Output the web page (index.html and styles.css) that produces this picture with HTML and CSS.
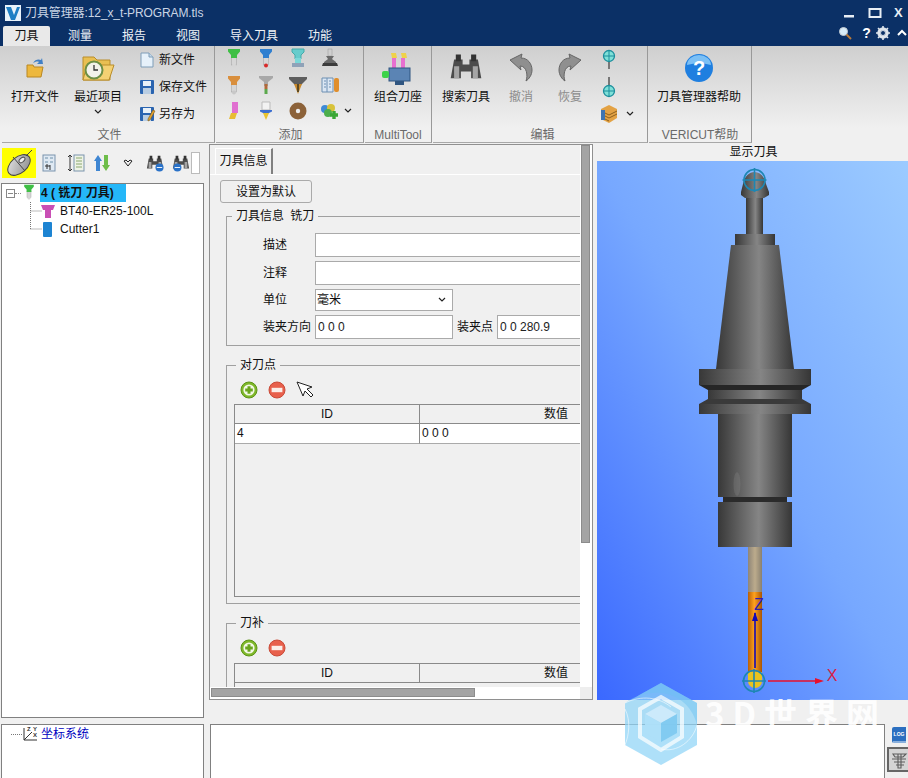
FILE: index.html
```html
<!DOCTYPE html>
<html lang="zh">
<head>
<meta charset="utf-8">
<title>刀具管理器</title>
<link rel="stylesheet" href="styles.css">
</head>
<body>
<svg class="defs" width="0" height="0" aria-hidden="true">
  <defs>
    <symbol id="tip" viewBox="0 0 20 20">
      <rect x="7.5" y="9" width="5" height="8" fill="#d6d6d6" stroke="#a8a8a8" stroke-width=".6"/>
      <path d="M4 1h12v2.500l-3 3.500v3H7V7L4 3.500z" fill="var(--c)"/>
      <circle cx="10" cy="17.500" r="2" fill="var(--d)"/>
    </symbol>
    <symbol id="plus" viewBox="0 0 18 18">
      <circle cx="9" cy="9" r="8" fill="#7fb82a" stroke="#5c9415"/>
      <circle cx="9" cy="9" r="5.600" fill="#f4f8e8"/>
      <path d="M9 5.200v7.600M5.200 9h7.600" stroke="#6aa51c" stroke-width="3"/>
    </symbol>
    <symbol id="minus" viewBox="0 0 18 18">
      <circle cx="9" cy="9" r="8" fill="#e8604c" stroke="#c94a38"/>
      <rect x="3.600" y="6.800" width="10.800" height="4.400" fill="#fbeee9"/>
    </symbol>
    <symbol id="binoc" viewBox="0 0 20 20">
      <path d="M3 5h5v3h4V5h5l2 11h-6v-4H7v4H1z" fill="#4c4c4c"/>
      <path d="M4 2h3v4H4zM13 2h3v4h-3z" fill="#333"/>
      <path d="M3 9h3v7H3zM14 9h3v7h-3z" fill="#a5a5a5"/>
    </symbol>
    <symbol id="chev" viewBox="0 0 8 6">
      <path d="M1 1l3 3 3-3" fill="none" stroke="#222" stroke-width="1.200"/>
    </symbol>
    <linearGradient id="steel" x1="0" x2="1" y1="0" y2="0">
      <stop offset="0" stop-color="#383838"/><stop offset=".55" stop-color="#858585"/><stop offset="1" stop-color="#363636"/>
    </linearGradient>
    <linearGradient id="orange" x1="0" x2="1" y1="0" y2="0">
      <stop offset="0" stop-color="#b85f08"/><stop offset=".45" stop-color="#ffa21c"/><stop offset="1" stop-color="#a85505"/>
    </linearGradient>
    <linearGradient id="tan" x1="0" x2="1" y1="0" y2="0">
      <stop offset="0" stop-color="#8f8678"/><stop offset=".5" stop-color="#bcab8c"/><stop offset="1" stop-color="#8a8170"/>
    </linearGradient>
    <linearGradient id="sky" x1="0" y1="1" x2="1" y2="0">
      <stop offset="0" stop-color="#3a68ff"/><stop offset=".5" stop-color="#77a8ff"/><stop offset="1" stop-color="#9ccbff"/>
    </linearGradient>
    <linearGradient id="mouse" x1="0" x2="1" y1="0" y2="1">
      <stop offset="0" stop-color="#e4e4e4"/><stop offset="1" stop-color="#8a8a8a"/>
    </linearGradient>
  </defs>
</svg>

<header class="titlebar">
  <svg class="logo" viewBox="0 0 16 16"><rect width="16" height="16" fill="#e9f3fb"/><path d="M1 2h5l3 8 3-8h3l-5 13H6z" fill="#1f7fc4"/></svg>
  <span class="title">刀具管理器:12_x_t-PROGRAM.tls</span>
  <div class="winbtns">
    <svg class="winic" viewBox="0 0 14 12"><rect x="2" y="8" width="10" height="2.500" fill="#e8eef5"/></svg>
    <svg class="winic" viewBox="0 0 14 12"><path d="M1.500 2h11v8h-11z" fill="none" stroke="#e8eef5" stroke-width="2"/></svg>
    <span class="closex">X</span>
  </div>
</header>

<nav class="tabbar">
  <span class="tab tab-on">刀具</span>
  <span class="tab t2">测量</span>
  <span class="tab t3">报告</span>
  <span class="tab t4">视图</span>
  <span class="tab t5">导入刀具</span>
  <span class="tab t6">功能</span>
  <div class="tabtools">
    <svg class="tt ttmag" viewBox="0 0 14 14"><circle cx="5.500" cy="5.500" r="4" fill="#d8ecf8" stroke="#c4ccd4"/><path d="M8.500 8.500l4.500 4.500" stroke="#b87a3a" stroke-width="2"/></svg>
    <span class="tq">?</span>
    <svg class="tt" viewBox="0 0 14 14"><circle cx="7" cy="7" r="4.200" fill="none" stroke="#dfe5ec" stroke-width="3"/><path d="M7 0v14M0 7h14M2 2l10 10M12 2L2 12" stroke="#dfe5ec" stroke-width="1.600"/><circle cx="7" cy="7" r="2" fill="#0b3066"/></svg>
    <svg class="tt" viewBox="0 0 14 14"><path d="M3 9l4-4 4 4" fill="none" stroke="#fff" stroke-width="2"/></svg>
  </div>
</nav>

<section class="ribbon">
  <div class="group g-file">
    <div class="gbody">
      <div class="big w60">
        <div class="bigic"><svg class="i24" viewBox="0 0 24 24"><path d="M4 9h6l1 2h9l-2 10H4z" fill="#edb83e" stroke="#b98722"/><path d="M10 7c2-4 6-4 8-3l1-2 1 6-6 0 2-2c-2-1-4 0-6 1z" fill="#3f7fc6"/></svg></div>
        <span>打开文件</span>
      </div>
      <div class="big w66">
        <div class="bigic"><svg class="i34" viewBox="0 0 34 28"><path d="M2 3h11l3 3h13v20H2z" fill="#e9bf52" stroke="#b98d2a"/><path d="M6 11h27l-5 15H2z" fill="#f4d173" stroke="#b98d2a"/><circle cx="13" cy="16" r="8.500" fill="#f2f2ea" stroke="#6d8f45" stroke-width="2"/><path d="M13 11v5h4" fill="none" stroke="#333" stroke-width="1.300"/></svg></div>
        <span>最近项目</span>
        <svg class="chev"><use href="#chev"/></svg>
      </div>
      <div class="smallcol">
        <div class="small"><svg class="i16" viewBox="0 0 16 16"><path d="M2 1h8l4 4v10H2z" fill="#e6f1fa" stroke="#7f9db8"/><path d="M10 1v4h4" fill="#c5d9ea" stroke="#7f9db8"/></svg><span>新文件</span></div>
        <div class="small"><svg class="i16" viewBox="0 0 16 16"><rect x="1" y="1" width="14" height="14" rx="1" fill="#2a64b0"/><rect x="4" y="2" width="8" height="5" fill="#e8f0f8"/><rect x="4" y="9" width="8" height="6" fill="#b9cde2"/></svg><span>保存文件</span></div>
        <div class="small"><svg class="i16" viewBox="0 0 16 16"><rect x="1" y="1" width="14" height="14" rx="1" fill="#2a64b0"/><rect x="4" y="2" width="8" height="5" fill="#e8f0f8"/><rect x="4" y="9" width="8" height="6" fill="#b9cde2"/><path d="M9 13l5-9 2 1-5 9-2 1z" fill="#e0a030" stroke="#7d5a18" stroke-width=".6"/></svg><span>另存为</span></div>
      </div>
    </div>
    <div class="glabel">文件</div>
  </div>

  <div class="group g-add">
    <div class="gbody addgrid">
      <svg class="i20 c-green"><use href="#tip"/></svg>
      <svg class="i20 c-blue"><use href="#tip"/></svg>
      <svg class="i20" viewBox="0 0 20 20"><path d="M4 1h12v3l-3 3v4H7V7L4 4z" fill="#66cccc" stroke="#4aa"/><rect x="7" y="10" width="6" height="5" fill="#7ad8d8"/><rect x="4" y="15" width="12" height="4" fill="#8fa2b8"/></svg>
      <svg class="i20" viewBox="0 0 20 20"><rect x="8" y="1" width="4" height="7" fill="#cfcfcf" stroke="#999" stroke-width=".5"/><path d="M6 8h8l-2 3 4 3v1H4v-1l4-3z" fill="#6a6a6a"/><path d="M3 15h14l1 3H2z" fill="#3c3c3c"/></svg>
      <i></i>
      <svg class="i20 c-orange"><use href="#tip"/></svg>
      <svg class="i20" viewBox="0 0 20 20"><path d="M3 1h14v2l-5 4v4H8V7L3 3z" fill="#a8a8a8"/><rect x="8.500" y="9" width="3" height="5" fill="#b26a3a"/><rect x="8.500" y="14" width="3" height="5" fill="#5ba84c"/></svg>
      <svg class="i20" viewBox="0 0 20 20"><path d="M1 2h18v2l-6 6H7L1 4z" fill="#5e5e5e"/><path d="M6 9h8l-4 10z" fill="#c98a2e"/><path d="M9 9h2v8h-2z" fill="#5e4a22"/></svg>
      <svg class="i20" viewBox="0 0 20 20"><path d="M2 3h11v14H2z" fill="#dbe6f3" stroke="#6d8fb2"/><path d="M7 3v14" stroke="#6d8fb2"/><path d="M4 6h2M4 9h2M4 12h2M9 6h2M9 9h2M9 12h2" stroke="#6d8fb2"/><rect x="14" y="3" width="5" height="14" rx="2" fill="#e08e2c"/></svg>
      <i></i>
      <svg class="i20" viewBox="0 0 20 20"><rect x="8" y="1" width="6" height="11" fill="#e070d0"/><path d="M7 12h6l-2 6H5z" fill="#e8bc34"/></svg>
      <svg class="i20" viewBox="0 0 20 20"><path d="M6 1h8v8H6z" fill="#f2f2f2" stroke="#bbb"/><path d="M4 9h12v1.500l-4 2H8l-4-2z" fill="#3c6fd0"/><path d="M7 12h6l-3 7z" fill="#e8c230"/></svg>
      <svg class="i20" viewBox="0 0 20 20"><circle cx="10" cy="10" r="8.500" fill="#8c6239"/><circle cx="10" cy="10" r="2.200" fill="#eee"/></svg>
      <svg class="i20" viewBox="0 0 20 20"><circle cx="5" cy="8" r="4" fill="#3f8ad6"/><circle cx="11" cy="7" r="4" fill="#d8c23a"/><circle cx="8" cy="12" r="4" fill="#4cae4c"/><path d="M14 10v8M10 14h8" stroke="#3aa635" stroke-width="3.400"/></svg>
      <svg class="chev chev-add"><use href="#chev"/></svg>
    </div>
    <div class="glabel">添加</div>
  </div>

  <div class="group g-multi">
    <div class="gbody">
      <div class="big w66b">
        <div class="bigic"><svg class="i34" viewBox="0 0 34 34"><rect x="11" y="7" width="4" height="11" fill="#e76fd0"/><rect x="20" y="7" width="4" height="11" fill="#e76fd0"/><path d="M10 2h5l1 5h-5zM20 2h5l1 5h-5z" fill="#efd24a"/><rect x="8" y="17" width="21" height="13" fill="#5b84b4" stroke="#2f5580"/><rect x="14" y="30" width="9" height="4" fill="#2f5580"/><rect x="1" y="20" width="7" height="7" rx="2" fill="#3cd24a"/></svg></div>
        <span>组合刀座</span>
      </div>
    </div>
    <div class="glabel">MultiTool</div>
  </div>

  <div class="group g-edit">
    <div class="gbody">
      <div class="big w56">
        <div class="bigic"><svg class="i34"><use href="#binoc"/></svg></div>
        <span>搜索刀具</span>
      </div>
      <div class="big w54 off">
        <div class="bigic"><svg class="i28" viewBox="0 0 28 32"><path d="M3 8l12-6-1 4c7 0 11 6 11 12 0 5-3 9-6 11 2-5 1-15-6-15l1 4z" fill="#8f8f8f" stroke="#666"/></svg></div>
        <span>撤消</span>
      </div>
      <div class="big w44 off">
        <div class="bigic"><svg class="i28 flip" viewBox="0 0 28 32"><path d="M3 8l12-6-1 4c7 0 11 6 11 12 0 5-3 9-6 11 2-5 1-15-6-15l1 4z" fill="#8f8f8f" stroke="#666"/></svg></div>
        <span>恢复</span>
      </div>
      <div class="editcol">
        <svg class="i16t" viewBox="0 0 16 24"><path d="M8 12v9" stroke="#777" stroke-width="2"/><circle cx="8" cy="8" r="5.500" fill="#7fe0d8" stroke="#1c8e9c" stroke-width="1.300"/><path d="M8 2v12M2 8h12" stroke="#1c8e9c"/></svg>
        <i></i>
        <svg class="i16t" viewBox="0 0 16 24"><path d="M8 2v9" stroke="#777" stroke-width="2"/><circle cx="8" cy="16" r="5.500" fill="#7fe0d8" stroke="#1c8e9c" stroke-width="1.300"/><path d="M8 10v12M2 16h12" stroke="#1c8e9c"/></svg>
        <i></i>
        <svg class="i20" viewBox="0 0 20 20"><path d="M10 1l8 4v9l-8 5-8-4V5z" fill="#e3a244"/><path d="M2 7l8 4 8-4M2 10l8 4 8-4M2 13l8 4" fill="none" stroke="#8d5f1c"/><rect x="2" y="6" width="4" height="10" fill="#3f74b0"/></svg>
        <svg class="chev"><use href="#chev"/></svg>
      </div>
    </div>
    <div class="glabel">编辑</div>
  </div>

  <div class="group g-help">
    <div class="gbody">
      <div class="big w103">
        <div class="bigic"><svg class="i30" viewBox="0 0 30 30"><circle cx="15" cy="15" r="14" fill="#1f7fe0"/><path d="M3 12a12 10 0 0 1 24 0 24 12 0 0 0-24 0z" fill="#7cc0f5"/><text class="qm" x="15" y="22" text-anchor="middle">?</text></svg></div>
        <span>刀具管理器帮助</span>
      </div>
    </div>
    <div class="glabel">VERICUT帮助</div>
  </div>
</section>

<main class="work">
  <aside class="left">
    <div class="ltools">
      <div class="mousebox"><svg class="i30" viewBox="0 0 30 30"><ellipse cx="15" cy="17" rx="13" ry="8" transform="rotate(-40 15 17)" fill="url(#mouse)" stroke="#444"/><path d="M9 9l12 14M22 8l6-6" fill="none" stroke="#444"/><ellipse cx="18" cy="12" rx="3.500" ry="2" transform="rotate(-40 18 12)" fill="#eee" stroke="#555"/></svg></div>
      <span class="lt"><svg class="i18" viewBox="0 0 18 18"><rect x="3" y="1" width="12" height="16" fill="#dfe9f3" stroke="#7a93ad"/><path d="M5 4h3M10 4h3M5 8h3M10 8h3" stroke="#6d8fa8"/><path d="M7 10v5M5 12h5M10 11v5" stroke="#333"/></svg></span>
      <span class="lt"><svg class="i18" viewBox="0 0 18 18"><rect x="7" y="1" width="10" height="16" fill="#eef3e6" stroke="#7a93ad"/><path d="M9 4h6M9 7h6M9 10h6M9 13h6" stroke="#8aa86e"/><path d="M3 1v16M1 3l2-2 2 2M1 15l2 2 2-2" fill="none" stroke="#333"/></svg></span>
      <span class="lt"><svg class="i18" viewBox="0 0 18 18"><path d="M5 1l4 6H7v10H3V7H1z" fill="#3f86d2"/><path d="M13 17l4-6h-2V1h-4v10H9z" fill="#6ebd4a"/></svg></span>
      <span class="lt"><svg class="i10" viewBox="0 0 10 8"><path d="M1 2l2-1 2 2 2-2 2 1-4 5z" fill="none" stroke="#222"/></svg></span>
      <span class="lt"><svg class="i18" viewBox="0 0 20 20"><use href="#binoc" width="20" height="20"/><circle cx="15" cy="15" r="4.500" fill="#2a72c8"/><path d="M12 15h6" stroke="#fff"/></svg></span>
      <span class="lt"><svg class="i18" viewBox="0 0 20 20"><use href="#binoc" width="20" height="20"/><circle cx="6" cy="15" r="4.500" fill="#2a72c8"/><path d="M3 15h6" stroke="#fff"/></svg></span>
      <span class="ltbox"></span>
    </div>
    <div class="tree">
      <div class="trow">
        <span class="exp"></span><span class="dots"></span>
        <svg class="i16 c-green tico"><use href="#tip"/></svg>
        <span class="sel">4 ( 铣刀 刀具)</span>
      </div>
      <div class="trow">
        <svg class="conn" viewBox="0 0 12 18"><path d="M.5 0v18M.5 9H12" stroke="#777" stroke-dasharray="1 1"/></svg>
        <svg class="i16 tinner" viewBox="0 0 16 16"><path d="M1 2h14l-2 5h-2v8H5V7H3z" fill="#c94fb5"/></svg>
        <span>BT40-ER25-100L</span>
      </div>
      <div class="trow">
        <svg class="conn" viewBox="0 0 12 18"><path d="M.5 0v9M.5 9H12" stroke="#777" stroke-dasharray="1 1"/></svg>
        <svg class="i16 tinner" viewBox="0 0 16 16"><rect x="3" y="1" width="9" height="15" rx="1" fill="#1d84d2"/></svg>
        <span>Cutter1</span>
      </div>
    </div>
  </aside>

  <section class="center">
    <div class="scroller">
      <div class="tabstrip"><span class="paneltab">刀具信息</span></div>
      <button class="defbtn" type="button">设置为默认</button>
      <fieldset class="box box1">
        <legend class="lg1">刀具信息 铣刀</legend>
        <div class="frow"><label class="fl">描述</label><input class="in wide" type="text"></div>
        <div class="frow"><label class="fl">注释</label><input class="in wide" type="text"></div>
        <div class="frow"><label class="fl">单位</label><div class="sel-box"><span>毫米</span><svg class="chev"><use href="#chev"/></svg></div></div>
        <div class="frow"><label class="fl">装夹方向</label><input class="in mid" type="text" value="0 0 0"><label class="fl2">装夹点</label><input class="in wide2" type="text" value="0 0 280.9"></div>
      </fieldset>
      <fieldset class="box box2">
        <legend>对刀点</legend>
        <div class="ops">
          <svg class="i18"><use href="#plus"/></svg>
          <svg class="i18"><use href="#minus"/></svg>
          <svg class="i18" viewBox="0 0 18 18"><path d="M1 1l6 14 2-5 6 6 2-2-6-6 5-2z" fill="#fff" stroke="#222"/></svg>
        </div>
        <div class="tbl">
          <div class="th">ID</div><div class="th thl">数值</div>
          <div class="td">4</div><div class="td tdl">0 0 0</div>
        </div>
      </fieldset>
      <fieldset class="box box3">
        <legend>刀补</legend>
        <div class="ops">
          <svg class="i18"><use href="#plus"/></svg>
          <svg class="i18"><use href="#minus"/></svg>
        </div>
        <div class="tbl tbl2">
          <div class="th">ID</div><div class="th thl">数值</div>
        </div>
      </fieldset>
    </div>
    <div class="vbar"><div class="vthumb"></div></div>
    <div class="hbar"><div class="hthumb"></div></div>
    <div class="corner"></div>
  </section>

  <section class="viewer">
    <div class="vlabel">显示刀具</div>
    <svg class="scene" viewBox="597 161 311 539" preserveAspectRatio="none">
      <rect x="597" y="161" width="311" height="539" fill="url(#sky)"/>
      <rect x="746" y="196" width="17" height="38" fill="url(#steel)"/>
      <path d="M743 184c3-16 20-16 23 0l3 8v3l-5 3h-19l-4-3v-3z" fill="url(#steel)"/>
      <rect x="735" y="234" width="40" height="11" fill="url(#steel)"/>
      <path d="M731 245h48l15 124h-78z" fill="url(#steel)"/>
      <rect x="699" y="369" width="112" height="16" fill="url(#steel)"/>
      <path d="M699 385h112l-9 5h-94z" fill="#262626"/>
      <rect x="708" y="390" width="94" height="9" fill="url(#steel)"/>
      <path d="M708 399h94l9 5h-112z" fill="#3a3a3a"/>
      <rect x="699" y="404" width="112" height="10" fill="url(#steel)"/>
      <rect x="718" y="414" width="74" height="83" fill="url(#steel)"/>
      <ellipse cx="737" cy="484" rx="3.500" ry="12" fill="#b0b0b0" fill-opacity=".16"/>
      <rect x="723" y="497" width="64" height="5" fill="#2b2b2b"/>
      <rect x="718" y="502" width="74" height="45" fill="url(#steel)"/>
      <rect x="748" y="547" width="14" height="45" fill="url(#tan)"/>
      <rect x="748" y="592" width="14" height="80" fill="url(#orange)"/>
      <path d="M748 672h14v9a7 7 0 0 1-14 0z" fill="#e8c21e"/>
      <g class="cross"><circle cx="754.500" cy="180" r="10.500"/><path d="M754.500 168v24M742.500 180h24"/><circle cx="754" cy="681" r="10.500"/><path d="M754 669v24M742 681h24"/></g>
      <path d="M755 668v-55" stroke="#1208b8" stroke-width="1.600"/><path d="M755 612l-3 9h6z" fill="#1208b8"/>
      <path d="M768 681h48" stroke="#e8102c" stroke-width="1.600"/><path d="M824 681l-9-3v6z" fill="#e8102c"/>
      <text class="axis axz" x="759" y="610" text-anchor="middle">Z</text>
      <text class="axis axx" x="832" y="681" text-anchor="middle">X</text>
    </svg>
  </section>
</main>

<footer class="bottom">
  <div class="coord">
    <span class="cdots"></span>
    <svg class="i16" viewBox="0 0 16 16"><path d="M2 2v12h13M2 14l8-8" fill="none" stroke="#333"/><text class="cxyz" x="5" y="5">Z</text><text class="cxyz" x="11" y="5">Y</text><text class="cxyz" x="11" y="11">X</text></svg>
    <span class="clink">坐标系统</span>
  </div>
  <div class="logpane"></div>
  <div class="sidebtns">
    <svg class="logic" viewBox="0 0 16 18"><path d="M1 2a2 2 0 0 1 2-2h12v16H3a2 2 0 0 1-2-2z" fill="#2b6fc0"/><text class="lgt" x="8" y="9" text-anchor="middle">LOG</text><path d="M2 15h13" stroke="#e8f0f8"/></svg>
    <div class="pressed"><svg class="i18" viewBox="0 0 18 18"><path d="M3 3h13l-3 3H5zM2 8h14M4 11h11M6 14h8M8 3v14h3V3" fill="none" stroke="#5c5c5c" stroke-width="1.100"/></svg></div>
  </div>
</footer>

<div class="watermark" aria-hidden="true">
  <svg class="wmhex" viewBox="0 0 72 82">
    <path d="M36 0l36 20v42L36 82 0 62V20z" fill="#8fd4f6" fill-opacity=".72"/>
    <path d="M36 0l36 20v22C68 26 56 12 36 10 24 9 10 12 0 20z" fill="#6cc0f2" fill-opacity=".45"/>
    <path d="M0 20c16-8 34-6 46 4M72 42C68 58 52 70 36 66M0 62c4-10 6-24 0-36" fill="none" stroke="#fff" stroke-opacity=".7" stroke-width=".8"/>
    <path d="M36 14l21 12v28L36 67 15 54V26z" fill="none" stroke="#fff" stroke-opacity=".7" stroke-width="4"/>
    <path d="M36 22l16 9-16 9-16-9z" fill="#cdeafb" fill-opacity=".95"/>
    <path d="M20 31l16 9v19l-16-9z" fill="#aedff9" fill-opacity=".95"/>
    <path d="M52 31l-16 9v19l16-9z" fill="#7fc9f0" fill-opacity=".95"/>
  </svg>
  <span class="wmtext">3D世界网</span>
</div>
</body>
</html>
```
FILE: styles.css
```css
* { box-sizing: border-box; }
html, body { margin: 0; padding: 0; }
body {
  width: 908px; height: 778px; overflow: hidden; position: relative;
  background: #f0f0f0; color: #111;
  font: 12px/16px "Liberation Sans", "Noto Sans CJK SC", sans-serif;
}
svg { display: block; flex: none; overflow: visible; }
.defs { position: absolute; }

.i10 { width: 10px; height: 8px; }
.i16 { width: 16px; height: 16px; }
.i18 { width: 18px; height: 18px; }
.i20 { width: 20px; height: 20px; }
.i24 { width: 24px; height: 24px; }
.i28 { width: 28px; height: 32px; }
.i30 { width: 30px; height: 30px; }
.i34 { width: 34px; height: 34px; }
.i16t { width: 16px; height: 24px; }
.flip { transform: scaleX(-1); }
.chev { width: 8px; height: 6px; }

.c-green { --c: #3fbf45; --d: #d6d6d6; }
.c-blue { --c: #2f7fd0; --d: #d82a2a; }
.c-orange { --c: #d98f3d; --d: #c8c8c8; }

.titlebar { height: 25px; background: #0b3066; color: #c9d5e5; display: flex; align-items: center; padding-left: 5px; }
.logo { width: 16px; height: 16px; margin-right: 4px; }
.title { white-space: nowrap; letter-spacing: -.1px; }
.winbtns { margin-left: auto; display: flex; align-items: center; gap: 12px; padding-right: 2px; }
.winic { width: 14px; height: 12px; }
.closex { color: #e8eef5; font-weight: 700; font-size: 13px; width: 12px; }

.tabbar { height: 21px; background: #0b3066; display: flex; color: #eef2f7; line-height: 23px; }
.tab { text-align: center; white-space: nowrap; }
.tab-on { width: 47px; margin-left: 3px; margin-top: 1px; background: #e9e9e9; color: #111; line-height: 21px; border-radius: 2px 2px 0 0; }
.t2 { width: 30px; margin-left: 15px; }
.t3 { width: 30px; margin-left: 24px; }
.t4 { width: 30px; margin-left: 24px; }
.t5 { width: 60px; margin-left: 21px; }
.t6 { width: 30px; margin-left: 21px; }
.tabtools { margin-left: auto; margin-right: -1px; display: flex; align-items: flex-start; gap: 5px; padding-top: 1px; }
.tt { width: 14px; height: 14px; }
.ttmag { margin-right: 5px; }
.tq { color: #fff; font-weight: 700; font-size: 14px; line-height: 14px; width: 9px; text-align: center; }

.ribbon { height: 97px; display: flex; padding-left: 2px; background: linear-gradient(#cfcfcf, #f0f0f0 85%); }
.group { display: flex; flex-direction: column; border-right: 1px solid #999; border-bottom: 1px solid #a8a8a8; margin-right: 1px; }
.gbody { flex: 1; display: flex; min-height: 0; }
.glabel { height: 14px; flex: none; text-align: center; color: #6a6a6a; line-height: 14px; white-space: nowrap; }
.g-file { width: 213px; padding-left: 3px; }
.g-add { width: 148px; padding-left: 2px; }
.g-multi { width: 67px; }
.g-edit { width: 215px; padding-left: 5px; }
.g-help { width: 103px; margin-right: 0; }

.big { display: flex; flex-direction: column; align-items: center; white-space: nowrap; }
.bigic { height: 43px; flex: none; display: flex; align-items: center; justify-content: center; }
.big > span { line-height: 17px; }
.big .chev { margin-top: 3px; }
.off { color: #8c8c8c; }
.w60 { width: 60px; }
.w66 { width: 66px; }
.w66b { width: 66px; }
.w56 { width: 56px; }
.w54 { width: 54px; }
.w44 { width: 44px; }
.w103 { width: 100px; }

.smallcol { margin-left: 8px; display: flex; flex-direction: column; }
.small { height: 27px; flex: none; display: flex; align-items: center; gap: 4px; white-space: nowrap; }

.addgrid { display: grid; grid-template-columns: repeat(4, 32px) 8px; grid-template-rows: repeat(3, 26.5px); justify-items: center; align-items: center; margin-top: -1px; }
.chev-add { margin-left: -4px; }

.editcol { width: 42px; flex: none; display: grid; grid-template-columns: 34px 8px; grid-template-rows: repeat(3, 27px); justify-items: center; align-items: center; }
.qm { font: 700 20px "Liberation Sans", sans-serif; fill: #fff; }

.work { height: 576px; margin-top: 1px; display: flex; }
.left { width: 209px; flex: none; }
.ltools { height: 39px; display: flex; padding: 4px 0 0 2px; align-items: flex-start; }
.mousebox { width: 34px; height: 30px; background: #ffff00; display: flex; align-items: center; justify-content: center; }
.lt { width: 26.4px; height: 30px; display: flex; align-items: center; justify-content: center; }
.ltbox { width: 9px; height: 22px; margin-top: 4px; background: #fff; border: 1px solid #bbb; margin-left: -3px; }
.tree { width: 203px; height: 535px; margin-left: 1px; background: #fff; border: 1px solid #808080; padding: 0 0 0 4px; }
.trow { height: 18px; display: flex; align-items: center; white-space: nowrap; }
.exp { width: 9px; height: 9px; border: 1px solid #888; background: linear-gradient(#888, #888) center/5px 1px no-repeat; }
.dots { width: 6px; border-top: 1px dotted #888; }
.tico { margin: -3px 3px 0 0; }
.sel { background: #25b7f8; font-weight: 700; height: 18px; line-height: 18px; padding: 0 1px; width: 86px; }
.conn { width: 12px; height: 18px; margin-left: 24px; }
.tinner { margin: 0 4px 0 -2px; }

.center { width: 384px; height: 556px; flex: none; border: 1px solid #909090; display: grid; grid-template-columns: 1fr 12px; grid-template-rows: 1fr 12px; background: #f0f0f0; }
.scroller { overflow: hidden; padding-top: 3px; min-width: 0; min-height: 0; }
.tabstrip { height: 27px; border-bottom: 1px solid #fff; padding-left: 5px; width: 700px; }
.paneltab { display: inline-block; height: 26px; width: 58px; line-height: 24px; text-align: center; border-right: 2px solid #808080; border-left: 1px solid #fff; border-top: 1px solid #fff; }
.defbtn { display: block; margin: 5px 0 0 10px; width: 92px; height: 23px; padding: 0; background: #f0f0f0; border: 1px solid #aaa; border-radius: 3px; font: inherit; color: #111; }
.box { margin: 5px 0 0 16px; width: 480px; padding: 8px 0 6px 0; border: 1px solid #a0a0a0; min-width: 0; }
.box legend { margin-left: 9px; padding: 0 4px; line-height: 16px; height: 16px; }
.box legend.lg1 { margin-left: 5px; word-spacing: 3px; }
.box1 { padding-top: 9px; }
.box2, .box3 { margin-top: 11px; padding-top: 7px; }
.frow { display: flex; align-items: center; margin-bottom: 4px; padding-left: 36px; }
.frow:last-child { margin-bottom: 0; }
.fl { width: 52px; white-space: nowrap; flex: none; }
.fl2 { width: 40px; margin-left: 4px; white-space: nowrap; flex: none; }
.in { height: 24px; border: 1px solid #aaa; background: #fff; font: inherit; color: #222; padding: 0 2px; outline: none; flex: none; }
.wide { width: 400px; }
.mid { width: 138px; }
.wide2 { width: 200px; }
.sel-box { width: 138px; height: 22px; background: #fff; border: 1px solid #aaa; display: flex; align-items: center; justify-content: space-between; padding: 0 6px 0 1px; flex: none; }
.ops { display: flex; gap: 10px; padding-left: 13px; height: 20px; align-items: center; margin-bottom: 4px; }
.box3 .ops { margin-bottom: 5px; }
.tbl { margin-left: 7px; width: 459px; height: 193px; border: 1px solid #8a8a8a; display: grid; grid-template-columns: 184px 1fr; grid-template-rows: 19px 20px; background: #f0f0f0; }
.tbl2 { height: 60px; }
.th { text-align: center; line-height: 18px; border-bottom: 1px solid #8a8a8a; }
.thl { border-left: 1px solid #8a8a8a; }
.td { background: #fff; line-height: 19px; padding-left: 2px; border-bottom: 1px solid #aaa; }
.tdl { border-left: 1px solid #8a8a8a; }

.vbar { background: #fff; padding-left: 1px; }
.vthumb { width: 9px; height: 398px; background: #a4a4a4; border: 1px solid #8c8c8c; }
.hbar { background: #fff; padding: 1px 0 0 1px; }
.hthumb { width: 264px; height: 9px; background: #a4a4a4; border: 1px solid #8c8c8c; }
.corner { background: #eeeeee; }

.viewer { width: 311px; flex: none; margin-left: 4px; }
.vlabel { height: 17px; line-height: 17px; text-align: center; color: #111; padding-left: 2px; }
.scene { width: 311px; height: 539px; }
.cross { fill: none; stroke: #1d87b4; stroke-width: 1.6; }
.axis { font: 16px "Liberation Sans", sans-serif; }
.axz { fill: #2a20b0; }
.axx { fill: #d81e46; }

.bottom { height: 54px; margin-top: 4px; display: flex; }
.coord { width: 203px; margin-left: 1px; background: #fff; border: 1px solid #808080; border-bottom: 0; display: flex; align-items: flex-start; padding: 1px 0 0 9px; flex: none; }
.cdots { width: 11px; border-top: 1px dotted #777; margin-top: 8px; }
.cxyz { font: 700 6px "Liberation Sans", sans-serif; fill: #333; }
.clink { color: #0000c0; margin-left: 3px; line-height: 17px; }
.logpane { width: 675px; margin-left: 6px; background: #fff; border: 1px solid #808080; border-bottom: 0; flex: none; }
.sidebtns { flex: 1; display: flex; flex-direction: column; align-items: center; padding: 3px 0 0 2px; }
.logic { width: 16px; height: 18px; }
.lgt { font: 700 5px "Liberation Sans", sans-serif; fill: #fff; }
.pressed { width: 23px; height: 25px; margin-top: 2px; background: #d4d4d4; border: 2px solid #666; display: flex; align-items: center; justify-content: center; }

.watermark { position: absolute; left: 625px; top: 683px; display: flex; pointer-events: none; }
.wmhex { width: 72px; height: 82px; }
.wmtext { font: 700 33px/32px "Noto Sans CJK SC", sans-serif; color: rgba(255, 255, 255, .92); margin: 14px 0 0 8px; letter-spacing: 8px; white-space: nowrap; }
```
